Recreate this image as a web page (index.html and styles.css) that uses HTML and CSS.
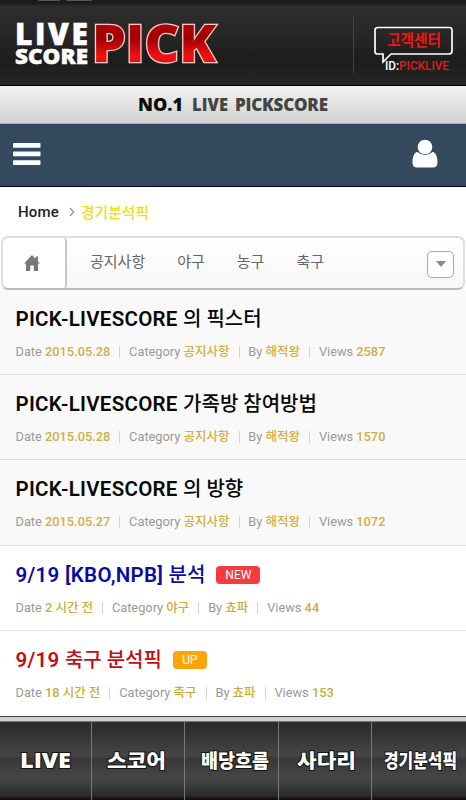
FILE: index.html
```html
<!DOCTYPE html>
<html lang="ko">
<head>
<meta charset="utf-8">
<meta name="viewport" content="width=device-width, initial-scale=1">
<title>LIVE SCORE PICK</title>
<link rel="stylesheet" href="styles.css">
</head>
<body>
<header class="masthead">
  <svg class="logo" width="206" height="50" viewBox="0 0 206 50" role="img" aria-label="LIVE SCORE PICK">
    <defs><linearGradient id="red" x1="0" y1="0" x2="0" y2="1"><stop offset="0" stop-color="#c5080b"/><stop offset=".45" stop-color="#a00004"/><stop offset=".7" stop-color="#ef1313"/><stop offset="1" stop-color="#c00508"/></linearGradient></defs>
    <g class="logo-small">
      <text x="-1" y="29" font-size="30" textLength="73" lengthAdjust="spacing">LIVE</text>
      <text x="-1" y="48" font-size="21.500" textLength="73" lengthAdjust="spacingAndGlyphs">SCORE</text>
    </g>
    <text class="logo-pick" x="76" y="46" font-size="51" textLength="124" lengthAdjust="spacingAndGlyphs" fill="url(#red)">PICK</text>
  </svg>
  <div class="support">
    <svg width="82" height="54" viewBox="0 0 82 54">
      <path d="M4 1.500H75.500Q78 1.500 78 4V25Q78 28 75 28H17L9 36V28H3.500Q1 28 1 25.500V4Q1 1.500 4 1.500Z" fill="none" stroke="#fff" stroke-width="1.700"/>
      <text class="support-title" x="13" y="20" textLength="54" lengthAdjust="spacingAndGlyphs">고객센터</text>
      <text class="support-id" x="11" y="44" textLength="64" lengthAdjust="spacingAndGlyphs"><tspan fill="#fff">ID:</tspan>PICKLIVE</text>
    </svg>
  </div>
</header>
<div class="slogan">
  <svg width="192" height="20" viewBox="0 0 192 20">
    <text x="0" y="16.500" textLength="45" lengthAdjust="spacingAndGlyphs" fill="#080808">NO.1</text>
    <text x="54" y="16.500" textLength="36" lengthAdjust="spacingAndGlyphs" fill="#444">LIVE</text>
    <text x="97" y="16.500" textLength="93" lengthAdjust="spacing" fill="#444">PICKSCORE</text>
  </svg>
</div>
<div class="navbar">
  <svg width="28" height="24" viewBox="0 0 28 24" fill="#f8ffff"><rect y="1" width="27.500" height="4.700" rx=".8"/><rect y="9.500" width="27.500" height="4.700" rx=".8"/><rect y="18.300" width="27.500" height="4.700" rx=".8"/></svg>
  <svg width="26" height="29" viewBox="0 0 26 29" fill="#fff"><path d="M5.500 13C2 13.500.5 18 .5 23.500Q.5 28.500 5 28.500H21Q25.500 28.500 25.500 23.500C25.500 18 24 13.500 20.500 13Q17 16 13 16T5.500 13Z"/><circle cx="13" cy="8" r="7.300"/></svg>
</div>
<nav class="breadcrumb">
  <span class="home">Home</span>
  <svg width="6" height="10" viewBox="0 0 6 10"><path d="M1 1L4.800 5L1 9" fill="none" stroke="#888" stroke-width="1.100"/></svg>
  <span class="here">경기분석픽</span>
</nav>
<nav class="tabs">
  <div class="tab-home"><svg width="16" height="16" viewBox="0 0 16 16" fill="#777"><path d="M8 0L16 8.500H14V16H9.800V10.500H6.200V16H2V8.500H0Z"/><rect x="11.500" y="1.500" width="2.500" height="5"/></svg></div>
  <div class="tab-list"><span>공지사항</span><span>야구</span><span>농구</span><span>축구</span></div>
  <div class="more"><svg width="10" height="6" viewBox="0 0 10 6"><path d="M0 0H10L5 6Z" fill="#888"/></svg></div>
</nav>
<main class="posts">
  <article class="post notice">
    <h2><span class="en">PICK-LIVESCORE </span><span class="ko">의 픽스터</span></h2>
    <p><span>Date <b>2015.05.28</b></span><span>Category <b class="ko">공지사항</b></span><span>By <b class="ko">해적왕</b></span><span>Views <b>2587</b></span></p>
  </article>
  <article class="post notice">
    <h2><span class="en">PICK-LIVESCORE </span><span class="ko">가족방 참여방법</span></h2>
    <p><span>Date <b>2015.05.28</b></span><span>Category <b class="ko">공지사항</b></span><span>By <b class="ko">해적왕</b></span><span>Views <b>1570</b></span></p>
  </article>
  <article class="post notice">
    <h2><span class="en">PICK-LIVESCORE </span><span class="ko">의 방향</span></h2>
    <p><span>Date <b>2015.05.27</b></span><span>Category <b class="ko">공지사항</b></span><span>By <b class="ko">해적왕</b></span><span>Views <b>1072</b></span></p>
  </article>
  <article class="post recent">
    <h2 class="blue"><span class="en">9/19 [KBO,NPB] </span><span class="ko">분석</span><i class="badge new">NEW</i></h2>
    <p><span>Date <b>2 <span class="ko">시간 전</span></b></span><span>Category <b class="ko">야구</b></span><span>By <b class="ko">쵸파</b></span><span>Views <b>44</b></span></p>
  </article>
  <article class="post recent">
    <h2 class="red"><span class="en">9/19 </span><span class="ko">축구 분석픽</span><i class="badge up">UP</i></h2>
    <p><span>Date <b>18 <span class="ko">시간 전</span></b></span><span>Category <b class="ko">축구</b></span><span>By <b class="ko">쵸파</b></span><span>Views <b>153</b></span></p>
  </article>
</main>
<footer class="bottom">
  <a><svg width="56" height="28"><text x="2" y="21" textLength="51" lengthAdjust="spacingAndGlyphs">LIVE</text></svg></a>
  <a><svg width="64" height="28"><text x="1" y="21" textLength="59" lengthAdjust="spacingAndGlyphs">스코어</text></svg></a>
  <a><svg width="74" height="28"><text x="6" y="21" textLength="68" lengthAdjust="spacingAndGlyphs">배당흐름</text></svg></a>
  <a><svg width="64" height="28"><text x="4" y="21" textLength="59" lengthAdjust="spacingAndGlyphs">사다리</text></svg></a>
  <a class="wide"><svg width="78" height="28"><text x="4" y="21" textLength="73" lengthAdjust="spacingAndGlyphs">경기분석픽</text></svg></a>
</footer>
</body>
</html>
```
FILE: styles.css
```css
* { box-sizing: border-box; }
body { margin: 0; width: 466px; height: 800px; overflow: hidden; background: #fff; font-family: Roboto, "Noto Sans CJK KR", sans-serif; display: flex; flex-direction: column; }
svg { display: block; flex: none; overflow: visible; }
.masthead { height: 86px; flex: none; display: flex; justify-content: space-between; padding: 16px 10px 0 16px; background: linear-gradient(90deg, #555 22px, transparent 22px 28px, #555 28px) 38px 0 / 54px 1px no-repeat, linear-gradient(#191919 0, #1d1d1d 4px, #2d2d2d 6px, #272727 35px, #1d1d1d 60px, #252525 85px, #000 85px); }
.logo text { font-family: "Open Sans", "Liberation Sans", sans-serif; font-weight: 800; }
.logo-small { fill: #fff; stroke: #fff; stroke-width: .5; }
.logo-pick { stroke: #ffc9c0; stroke-width: 2.5; paint-order: stroke; }
.support { height: 57px; border-left: 1px solid #454545; padding: 10px 0 0 20px; width: 103px; }
.support-title { font: 700 16px "Noto Sans CJK KR", sans-serif; fill: #ef1410; }
.support-id { font: 500 13px Roboto, sans-serif; fill: #e51b18; }
.slogan { height: 38px; flex: none; padding: 8px 0 0 138px; background: linear-gradient(#f2f2f2, #dedede 60%, #d3d3d3); border-bottom: 1px solid #aaa; }
.slogan text { font: 800 17px "Open Sans", sans-serif; }
.navbar { height: 63px; flex: none; display: flex; align-items: center; justify-content: space-between; padding: 0 28px 3px 13px; background: #34495e; border-bottom: 1px solid #05051e; }
.breadcrumb { height: 49px; flex: none; display: flex; align-items: center; padding: 0 18px; font-size: 15px; }
.home { font-weight: 500; color: #222; width: 51px; letter-spacing: .15px; }
.here { margin-left: 6px; font-size: 14.8px; font-weight: 500; color: #f0dc19; }
.tabs { height: 54px; flex: none; margin: 0 1px; display: flex; align-items: center; border: 2px solid #dedede; border-bottom-color: #bbb; border-radius: 7px; background: linear-gradient(#fff, #f7f7f7); }
.tab-home { width: 64px; height: 50px; display: flex; align-items: center; padding-left: 21px; border-right: 2px solid #c8c8c8; border-radius: 6px 3px 3px 6px; background: #fff; }
.tab-list { flex: 1; display: flex; gap: 32px; padding: 0 0 5px 23px; font-size: 15px; color: #666; }
.more { width: 27px; height: 27px; margin: 2px 9px 0 0; border: 1px solid #aaa; border-radius: 5px; background: #fff; display: flex; align-items: center; justify-content: center; }
.posts { flex: none; height: 426px; display: grid; grid-template-rows: repeat(5, 85.200px); background: #fff; }
.post { padding: 14px 15.5px 0; border-bottom: 1px solid #e8e8e8; }
.post:last-child { border-bottom: 0; }
.notice { background: #f9f9f9; border-bottom-color: #dcdcdc; }
h2 { margin: 0; height: 30px; font-size: 20px; line-height: 30px; font-weight: 500; color: #080808; display: flex; align-items: center; white-space: pre; }
.en { font-size: 20.5px; font-weight: 600; letter-spacing: .28px; }
.blue { color: #0a0aa8; }
.red { color: #c40d10; }
.badge { font: 400 12px/18px Roboto, sans-serif; color: #fff; border-radius: 4px; height: 18px; text-align: center; margin-left: 11px; }
.new { width: 44px; background: #f33b40; }
.up { width: 34px; background: #fba50b; }
.post p { margin: 8px 0 0; display: flex; align-items: center; height: 20px; font-size: 12.800px; color: #999; white-space: pre; }
.post p > span { line-height: 20px; }
.post p > span + span { margin-left: 9px; padding-left: 9.8px; background: linear-gradient(#d5d5d5, #d5d5d5) 0 4px / 1px 12px no-repeat; }
.post b { font-weight: 500; color: #d3ae43; }
.recent b { color: #c8ae38; }
.post p .ko { font-size: 12.500px; }
.bottom { flex: 1; display: grid; grid-template-columns: 92px 93px 94px 93px 94px; border-top: 1px solid #444; background: linear-gradient(#ccd0d0 0, #ccd0d0 4px, #292a2c 5px, #303132 16px, #464646 38px, #383838 42px, #464646 61px, #2b2b2b 79px, #190b0b 82px); padding-top: 5px; }
.bottom a { display: flex; justify-content: center; align-items: flex-start; padding-top: 25px; border-right: 1px solid #777; }
.bottom a:last-child { border: 0; }
.bottom text { font: 900 19px "Noto Sans CJK KR", sans-serif; fill: #fff; stroke: #151515; stroke-width: 2; paint-order: stroke; }
.bottom a:first-child text { font-family: "Open Sans", sans-serif; font-weight: 800; font-size: 21px; }
```
